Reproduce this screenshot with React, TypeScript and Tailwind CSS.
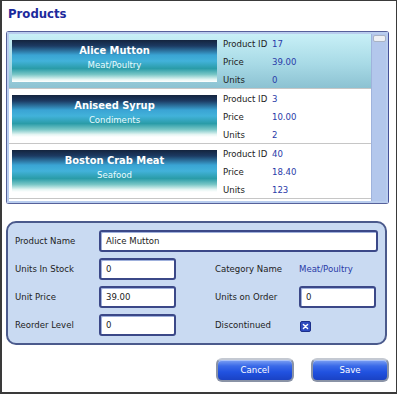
const products = [
  { id: 17, name: 'Alice Mutton', category: 'Meat/Poultry', price: '39.00', units: 0 },
  { id: 3, name: 'Aniseed Syrup', category: 'Condiments', price: '10.00', units: 2 },
  { id: 40, name: 'Boston Crab Meat', category: 'Seafood', price: '18.40', units: 123 },
];

const font = "font-['DejaVu_Sans_Condensed','DejaVu_Sans',sans-serif] [font-stretch:condensed]";

const headerBg =
  'bg-[linear-gradient(to_bottom,#14243e_0%,#1c3a62_14%,#3aa4d4_36%,#42b2da_50%,#2a9ca8_68%,#78c6c6_82%,#e4f5f3_94%,#ffffff_100%)]';

const Field = ({ value, wide }: { value: string; wide?: boolean }) => (
  <div
    className={`flex h-[22px] items-center rounded-[3px] border-2 border-[#3b4888] bg-white pl-[5px] text-[9.5px] text-[#222] shadow-[inset_1px_1px_0_#9fb0dc] ${
      wide ? 'w-[280px]' : 'w-[77px]'
    }`}
  >
    {value}
  </div>
);

const Label = ({ children }: { children: string }) => (
  <div className="w-[84px] shrink-0 text-[9.5px] text-[#222]">{children}</div>
);

const Button = ({ children }: { children: string }) => (
  <button className="h-[24px] w-[78px] rounded-[6px] border-2 border-[#8a93a6] border-t-[#c4c9d2] bg-[linear-gradient(to_bottom,#7ea2f4_0%,#3a6ae8_30%,#2152e0_60%,#1a42c4_100%)] text-[9.5px] text-white shadow-[inset_0_1px_0_#a9c2fa]">
    {children}
  </button>
);

export default function App() {
  return (
    <div className={`h-[395px] w-[400px] bg-white ${font}`}>
      <div className="h-[394px] w-[397px] border-b-2 border-l-2 border-r border-t border-[#3a3a3a] pl-[4px]">
        <h1 className="pl-[2px] pt-[4px] text-[13px] font-bold leading-[18px] text-[#1c2a9c]">Products</h1>

        <div className="mt-[8px] w-[383px] rounded-[3px] border border-[#56619a] border-r-[#46519a]">
          <div className="flex border-2 border-[#b9cdee]">
            <div className="flex-1 bg-white pb-[2px]">
              {products.map((p, i) => (
                <div
                  key={p.id}
                  className={`flex h-[55px] border-b border-[#c6c6c6] pl-[3px] pt-[6px] ${
                    i === 0 ? 'bg-[linear-gradient(to_bottom,#c8f0f7_0%,#a8dae6_55%,#8cc2d2_100%)]' : ''
                  }`}
                >
                  <div className={`flex h-[42px] w-[205px] flex-col items-center pt-[4px] ${headerBg}`}>
                    <div className="text-[11px] font-bold leading-[14px] text-white">{p.name}</div>
                    <div className="mt-[1px] text-[9.5px] leading-[12px] text-[#eafcff]">{p.category}</div>
                  </div>
                  <div className="ml-[6px] -mt-[5px] text-[9.5px] leading-[18px] text-[#222]">
                    <div className="flex">
                      <span className="w-[49px]">Product ID</span>
                      <span className="text-[#2a3aa8]">{p.id}</span>
                    </div>
                    <div className="flex">
                      <span className="w-[49px]">Price</span>
                      <span className="text-[#2a3aa8]">{p.price}</span>
                    </div>
                    <div className="flex">
                      <span className="w-[49px]">Units</span>
                      <span className="text-[#2a3aa8]">{p.units}</span>
                    </div>
                  </div>
                </div>
              ))}
            </div>
            <div className="w-[15px] border-l border-[#9fb3dc] bg-[#b3c7ec] pt-[1px]">
              <div className="mx-auto h-[7px] w-[13px] rounded-[2px] border border-[#a9b3c4] bg-[#eef0f4]" />
            </div>
          </div>
        </div>

        <div className="mt-[17px] flex w-[381px] flex-col gap-[6px] rounded-[10px] border-2 border-[#4b5a8c] bg-[#c9daf2] px-[7px] py-[7px]">
          <div className="flex items-center">
            <Label>Product Name</Label>
            <Field value="Alice Mutton" wide />
          </div>
          <div className="flex items-center">
            <Label>Units In Stock</Label>
            <Field value="0" />
            <div className="ml-[39px]" />
            <Label>Category Name</Label>
            <div className="text-[9.5px] text-[#2a3aa8]">Meat/Poultry</div>
          </div>
          <div className="flex items-center">
            <Label>Unit Price</Label>
            <Field value="39.00" />
            <div className="ml-[39px]" />
            <Label>Units on Order</Label>
            <Field value="0" />
          </div>
          <div className="flex items-center">
            <Label>Reorder Level</Label>
            <Field value="0" />
            <div className="ml-[39px]" />
            <Label>Discontinued</Label>
            <div className="ml-[1px] mt-[3px] flex h-[11px] w-[11px] items-center justify-center rounded-[2px] border border-[#1d2f8a] bg-[#2f4cc0]">
              <svg viewBox="0 0 10 10" className="h-[7px] w-[7px]">
                <path d="M2 2 L8 8 M8 2 L2 8" stroke="white" strokeWidth="2" strokeLinecap="round" />
              </svg>
            </div>
          </div>
        </div>

        <div className="mt-[13px] flex w-[383px] justify-end gap-[17px]">
          <Button>Cancel</Button>
          <Button>Save</Button>
        </div>
      </div>
    </div>
  );
}
